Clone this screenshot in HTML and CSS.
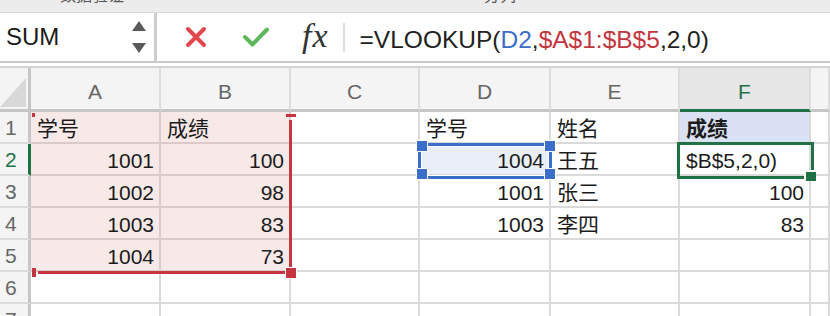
FILE: index.html
```html
<!DOCTYPE html>
<html lang="zh">

<head>
    <meta charset="UTF-8">
    <title>VLOOKUP</title>
    <link rel="stylesheet" href="styles.css">
</head>

<body>
    <div class="ribbon">
        <span class="tab">数据验证</span>
        <span class="tab tab-2">分列</span>
    </div>

    <div class="formula-bar">
        <div class="name-box">
            <span class="name">SUM</span>
            <svg class="spin" width="14" height="32" viewBox="0 0 14 32">
                <path d="M7 0 L14 10 L0 10 Z" fill="#5a5a5a" />
                <path d="M0 22 L14 22 L7 32 Z" fill="#5a5a5a" />
            </svg>
        </div>
        <div class="formula">
            <svg class="icon-x" width="22" height="22" viewBox="0 0 22 22">
                <path d="M3 3 L19 19 M19 3 L3 19" stroke="#e0484d" stroke-width="4" stroke-linecap="round" />
            </svg>
            <svg class="icon-ok" width="28" height="22" viewBox="0 0 28 22">
                <path d="M3 11 L10.5 18.5 L25 3.5" stroke="#5db85c" stroke-width="4" fill="none" stroke-linecap="round" stroke-linejoin="round" />
            </svg>
            <span class="fx">fx</span>
            <span class="sep"></span>
            <div class="input">=VLOOKUP(<span class="c-blue">D2</span>,<span class="c-red">$A$1:$B$5</span>,2,0)</div>
        </div>
    </div>
    <div class="gap"></div>

    <div class="sheet">
        <div class="corner"><span class="tri"></span></div>
        <div class="head">A</div>
        <div class="head">B</div>
        <div class="head">C</div>
        <div class="head">D</div>
        <div class="head">E</div>
        <div class="head active">F</div>
        <div class="head"></div>

        <div class="rowhead">1</div>
        <div class="cell ref">学号</div>
        <div class="cell ref">成绩</div>
        <div class="cell"></div>
        <div class="cell">学号</div>
        <div class="cell">姓名</div>
        <div class="cell title">成绩</div>
        <div class="cell"></div>

        <div class="rowhead active">2</div>
        <div class="cell ref num">1001</div>
        <div class="cell ref num">100</div>
        <div class="cell"></div>
        <div class="cell num picked">1004</div>
        <div class="cell">王五</div>
        <div class="cell editing">$B$5,2,0)</div>
        <div class="cell"></div>

        <div class="rowhead">3</div>
        <div class="cell ref num">1002</div>
        <div class="cell ref num">98</div>
        <div class="cell"></div>
        <div class="cell num">1001</div>
        <div class="cell">张三</div>
        <div class="cell num">100</div>
        <div class="cell"></div>

        <div class="rowhead">4</div>
        <div class="cell ref num">1003</div>
        <div class="cell ref num">83</div>
        <div class="cell"></div>
        <div class="cell num">1003</div>
        <div class="cell">李四</div>
        <div class="cell num">83</div>
        <div class="cell"></div>

        <div class="rowhead">5</div>
        <div class="cell ref num">1004</div>
        <div class="cell ref num">73</div>
        <div class="cell"></div>
        <div class="cell"></div>
        <div class="cell"></div>
        <div class="cell"></div>
        <div class="cell"></div>

        <div class="rowhead">6</div>
        <div class="cell"></div>
        <div class="cell"></div>
        <div class="cell"></div>
        <div class="cell"></div>
        <div class="cell"></div>
        <div class="cell"></div>
        <div class="cell"></div>

        <div class="rowhead">7</div>
        <div class="cell"></div>
        <div class="cell"></div>
        <div class="cell"></div>
        <div class="cell"></div>
        <div class="cell"></div>
        <div class="cell"></div>
        <div class="cell"></div>

        <!-- range marks drawn over the grid -->
        <span class="red red-right"></span>
        <span class="red red-bottom"></span>
        <span class="red red-tl"></span>
        <span class="red red-tr"></span>
        <span class="red red-bl"></span>
        <span class="red red-br"></span>

        <span class="blue-box"></span>
        <span class="blue-dot dot-tl"></span>
        <span class="blue-dot dot-tr"></span>
        <span class="blue-dot dot-bl"></span>
        <span class="blue-dot dot-br"></span>

        <span class="green-box"></span>
        <span class="green-dot"></span>
    </div>
</body>

</html>
```

FILE: styles.css
```css
* {
    box-sizing: border-box;
}

body {
    margin: 0;
    width: 830px;
    height: 316px;
    overflow: hidden;
    background: #fff;
    color: #1b1b1b;
    font-family: "Liberation Sans", "Noto Sans CJK SC", sans-serif;
}

.ribbon {
    height: 13px;
    background: #ececec;
    border-bottom: 1px solid #d9d9d9;
    overflow: hidden;
    display: flex;
}

.tab {
    font-size: 16px;
    line-height: 16px;
    margin-top: -12px;
    margin-left: 60px;
    color: #555;
}

.tab-2 {
    margin-left: 360px;
}

/* formula bar */
.formula-bar {
    height: 50px;
    display: flex;
    border-bottom: 2px solid #c9c9c9;
}

.name-box {
    width: 157px;
    display: flex;
    align-items: center;
    padding-left: 6px;
    border-right: 3px solid #cdcdcd;
}

.name {
    font-size: 24px;
    flex: 1;
}

.spin {
    margin-right: 8px;
}

.formula {
    flex: 1;
    display: flex;
    align-items: center;
}

.icon-x {
    margin-left: 28px;
}

.icon-ok {
    margin-left: 35px;
}

.fx {
    margin-left: 32px;
    font-family: "Liberation Serif", serif;
    font-style: italic;
    font-size: 34px;
    letter-spacing: 1px;
    color: #333;
    line-height: 1;
    margin-top: -2px;
}

.sep {
    width: 2px;
    height: 29px;
    background: #dedede;
    margin-left: 14px;
}

.input {
    margin-left: 15px;
    padding-top: 6px;
    font-size: 24.5px;
    color: #222;
}

.c-blue {
    color: #3a6fc9;
}

.c-red {
    color: #c4363f;
}

.gap {
    height: 5px;
    border-bottom: 2px solid #d3d3d3;
}

/* grid */
.sheet {
    position: relative;
    display: grid;
    grid-template-columns: 31px 130px 130px 129px 131px 129px 131px 1fr;
    grid-template-rows: 44px repeat(7, 32px);
    font-size: 21px;
}

.corner {
    background: #f4f4f4;
    border-right: 3px solid #c6c6c6;
    border-bottom: 3px solid #c6c6c6;
    position: relative;
}

.tri {
    position: absolute;
    left: 0;
    top: 10px;
    width: 26px;
    height: 29px;
    background: #d8d8d8;
    clip-path: polygon(100% 0, 100% 100%, 0 100%);
}

.head {
    background: #f4f4f4;
    color: #666;
    border-right: 2px solid #dcdcdc;
    border-bottom: 3px solid #c6c6c6;
    text-align: center;
    line-height: 44px;
    padding-top: 2px;
}

.head.active {
    background: #e6e6e6;
    color: #1f7145;
    border-bottom-color: #1f7145;
}

.rowhead {
    background: #f4f4f4;
    color: #666;
    border-right: 3px solid #c6c6c6;
    border-bottom: 2px solid #dcdcdc;
    padding-left: 5px;
    line-height: 32px;
}

.rowhead.active {
    color: #1f7145;
    border-right-color: #1f7145;
}

.cell {
    border-right: 2px solid #dadada;
    border-bottom: 2px solid #dadada;
    padding: 2px 5px 0 6px;
    line-height: 30px;
    white-space: nowrap;
    overflow: hidden;
}

.num {
    text-align: right;
}

.ref {
    background: #f8e9e9;
    border-color: #dccaca;
}

.title {
    background: #d9e1f2;
    font-weight: bold;
}

.picked {
    background: #e9eef9;
}

.editing {
    padding-left: 6px;
}

/* reference range in red */
.red {
    position: absolute;
    background: #c4363f;
}

.red-right {
    left: 289px;
    top: 52px;
    width: 3px;
    height: 148px;
}

.red-bottom {
    left: 38px;
    top: 203px;
    width: 247px;
    height: 3px;
}

.red-tl {
    left: 32px;
    top: 45px;
    width: 3px;
    height: 4px;
}

.red-tr {
    left: 286px;
    top: 46px;
    width: 10px;
    height: 3px;
}

.red-bl {
    left: 32px;
    top: 200px;
    width: 4px;
    height: 9px;
}

.red-br {
    left: 286px;
    top: 200px;
    width: 10px;
    height: 10px;
    box-shadow: 0 0 0 1px #fff;
}

/* lookup value in blue */
.blue-box {
    position: absolute;
    left: 418px;
    top: 75px;
    width: 134px;
    height: 36px;
    border: 3px solid #3a6fc9;
    box-shadow: inset 0 0 0 1px #fff;
}

.blue-dot {
    position: absolute;
    width: 10px;
    height: 10px;
    background: #3a6fc9;
    box-shadow: 0 0 0 1px #fff;
}

.dot-tl {
    left: 417px;
    top: 73px;
}

.dot-tr {
    left: 545px;
    top: 73px;
}

.dot-bl {
    left: 417px;
    top: 101px;
}

.dot-br {
    left: 545px;
    top: 101px;
}

/* active cell */
.green-box {
    position: absolute;
    left: 677px;
    top: 74px;
    width: 137px;
    height: 37px;
    border: 3px solid #1f7145;
}

.green-dot {
    position: absolute;
    left: 806px;
    top: 104px;
    width: 10px;
    height: 9px;
    background: #1f7145;
    box-shadow: -2px -2px 0 #fff;
}
```
